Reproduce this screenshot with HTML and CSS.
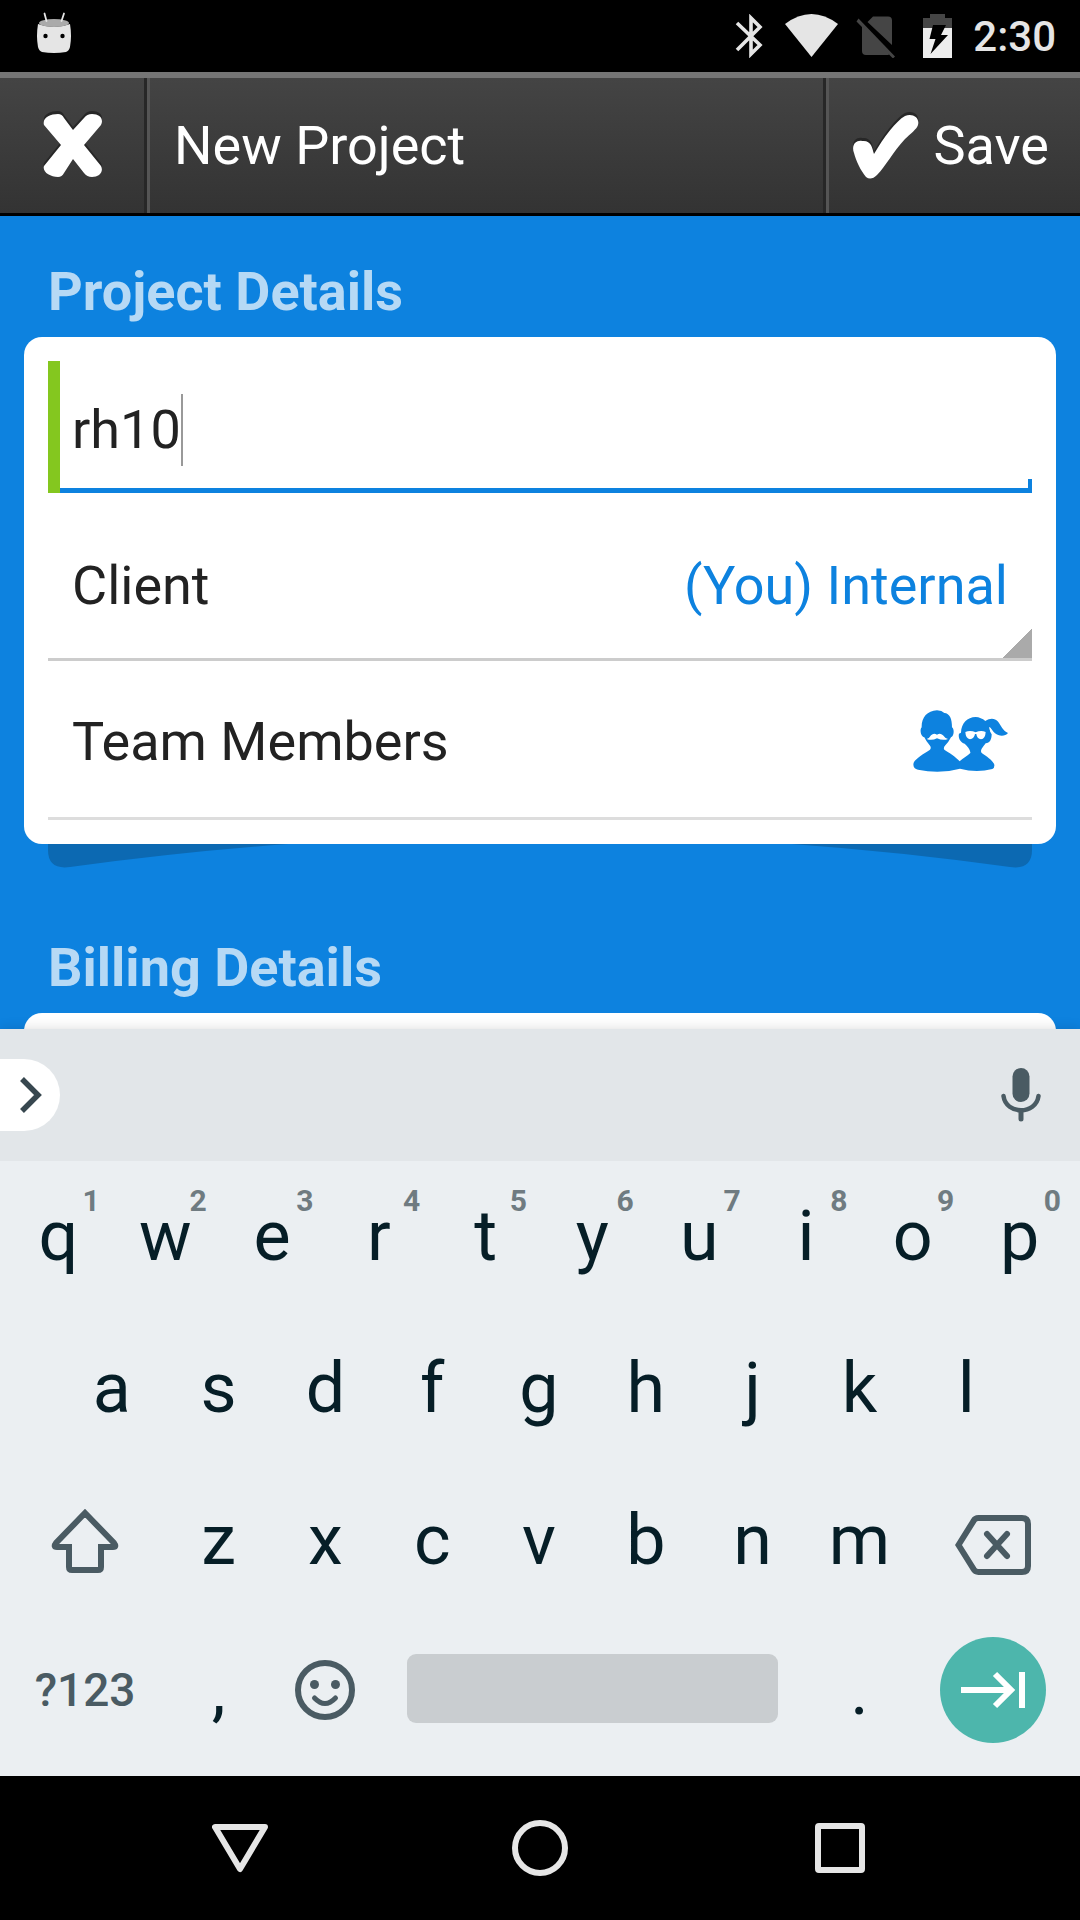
FILE: index.html
```html
<!DOCTYPE html>
<html lang="en">
<head>
<meta charset="utf-8">
<meta name="viewport" content="width=device-width, initial-scale=1">
<title>New Project</title>
<link rel="stylesheet" href="styles.css">
</head>
<body>
<div class="status-bar">
  <svg class="icon" width="36" height="54" viewBox="36 9 36 54" aria-hidden="true">
    <path d="M38 24Q54 30 70 24Q72 36 70 47Q69 51 66 52Q54 54 42 52Q39 51 38 47Q36 36 38 24Z" fill="#e5e5e5"/>
    <ellipse cx="54" cy="23" rx="15" ry="4" fill="#aaa"/>
    <path d="M44.5 13.500L46.500 21M64 13.500L61.500 21" stroke="#e5e5e5" stroke-width="1.800" stroke-linecap="round"/>
    <circle cx="45.500" cy="36" r="2.200"/><circle cx="62.500" cy="36" r="2.200"/>
  </svg>
  <div class="status-icons">
    <svg class="icon" width="28" height="44" viewBox="735 14 28 44" aria-label="Bluetooth" fill="none" stroke="#e5e5e5" stroke-width="3.600">
      <path d="M737 23L760 45L751 54V18L760 27L737 50"/>
    </svg>
    <svg class="icon wifi" width="54" height="44" viewBox="784 14 54 44" aria-label="Wi-Fi">
      <path d="M785 24Q811.500 4 838 24L811.500 57Z" fill="#e5e5e5"/>
    </svg>
    <svg class="icon sim" width="40" height="44" viewBox="856 14 40 44" aria-label="No SIM" fill="#454545">
      <path d="M867.500 22L873 16.500H888Q892 16.500 892 20.500V45ZM862 25L889.500 54Q889 55 887.500 55H866Q862 55 862 51Z"/>
      <path d="M858.500 18.500L895 56.500L893 58.500L856.500 21.500Z"/>
    </svg>
    <svg class="icon battery" width="30" height="44" viewBox="923 14 30 44" aria-label="Charging">
      <path d="M923 28V18H930V14H945V18H952V28Z" fill="#454545"/>
      <path d="M923 28H952V58H923Z" fill="#ededed"/>
      <path d="M933 25H946L941 35H948L930.500 54L935.500 39H929.500Z"/>
    </svg>
    <time class="clock">2:30</time>
  </div>
</div>

<header class="app-bar">
  <button class="bar-button close" type="button" aria-label="Close">
    <svg class="icon" width="62" height="71" viewBox="41 110 62 71" aria-hidden="true">
      <path d="M44 125C42 118 50 114 58 114Q62 114 64 118L73 130L84 118Q87 114 92 114C100 114 104 119 101 125L84 145L101 166C104 172 99 177 92 177Q87 177 84 173L73 159L64 173Q62 177 58 177C50 177 42 172 44 166L61 145Z" transform="translate(0 -3)" fill="#272727"/>
      <path d="M44 125C42 118 50 114 58 114Q62 114 64 118L73 130L84 118Q87 114 92 114C100 114 104 119 101 125L84 145L101 166C104 172 99 177 92 177Q87 177 84 173L73 159L64 173Q62 177 58 177C50 177 42 172 44 166L61 145Z" fill="#fff"/>
    </svg>
  </button>
  <h1 class="title">New Project</h1>
  <button class="bar-button save" type="button">
    <svg class="icon" width="68" height="71" viewBox="852 110 68 71" aria-hidden="true">
      <path d="M854 153C851 145 856 140 862 141C871 140 872 147 874 154C884 137 896 121 905 116C912 113 920 117 918 125C917 129 910 134 905 139C892 153 886 166 877 175Q871 181 866 177C861 171 856 161 854 153Z" transform="translate(0 -3)" fill="#272727"/>
      <path d="M854 153C851 145 856 140 862 141C871 140 872 147 874 154C884 137 896 121 905 116C912 113 920 117 918 125C917 129 910 134 905 139C892 153 886 166 877 175Q871 181 866 177C861 171 856 161 854 153Z" fill="#fff"/>
    </svg>
    Save
  </button>
</header>

<main class="content">
  <section class="group">
    <h2 class="group-title">Project Details</h2>
    <div class="card">
      <div class="row name-row">
        <input class="name-input" type="text" value="rh10" aria-label="Project name">
        <span class="caret"></span>
      </div>
      <div class="row client-row">
        <label for="client">Client</label>
        <select class="client-select" id="client"><option>(You) Internal</option></select>
      </div>
      <button class="row team-row" type="button">
        <span>Team Members</span>
        <svg class="icon" width="96" height="64" viewBox="67 58 288 192" aria-hidden="true">
          <path d="M72 216C78 203 104 188 121 177Q126 171 120 164Q110 153 104 140C94 138 89 118 96 110C95 82 112 60 142 59Q157 60 164 67C180 68 187 84 187 110C195 116 193 137 184 140Q177 154 167 164Q160 172 164 177C178 186 199 199 210 212C220 202 234 195 242 187Q243 181 236 171Q230 164 225 159C211 155 205 141 208 129L214 126C215 98 233 79 258 79Q274 80 287 91C302 81 316 83 324 92C334 104 340 122 355 127C347 138 328 138 316 128C308 121 305 112 299 108Q300 119 306 130C306 147 300 157 288 158Q281 167 276 174Q272 181 276 187C291 198 309 208 314 222Q315 232 308 235Q260 248 211 234Q150 251 85 237C74 234 69 228 72 216Z" fill="#0d82df"/>
          <path d="M111 145Q120 142 124 134Q132 126 142 132Q152 126 160 134Q166 143 175 145Q160 151 142 143Q126 151 111 145ZM227 124Q242 118 258 125Q274 118 288 124Q287 145 274 146Q262 145 260 130H256Q253 145 241 146Q228 144 227 124ZM299 109Q300 124 306 130L309 122Z" fill="#fff"/>
        </svg>
      </button>
    </div>
    <div class="card-shadow" aria-hidden="true">
      <svg class="icon" width="260" height="24" viewBox="0 0 260 24"><path d="M0 0H240Q130 8 22 23Q0 26 0 6Z" fill="#0c69b2"/></svg>
      <svg class="icon" width="260" height="24" viewBox="0 0 260 24"><path d="M260 0H20Q130 8 238 23Q260 26 260 6Z" fill="#0c69b2"/></svg>
    </div>
  </section>
  <section class="group billing">
    <h2 class="group-title">Billing Details</h2>
    <div class="card"></div>
  </section>
</main>

<div class="keyboard">
  <div class="suggestions">
    <button class="expand" type="button" aria-label="Expand">
      <svg class="icon" width="24" height="38" viewBox="0 0 24 38" fill="none" stroke="#37474f" stroke-width="5.500"><path d="M3 3L19 19L3 35"/></svg>
    </button>
    <button class="mic" type="button" aria-label="Voice input">
      <svg class="icon" width="40" height="54" viewBox="0 0 40 54" fill="none" stroke="#4a5b63" stroke-linecap="round"><rect x="11.500" y="0" width="17" height="34" rx="8.500" fill="#4a5b63" stroke="none"/><path d="M2.500 28C5 47 35 47 37.500 28" stroke-width="4.500"/><path d="M20 44V51" stroke-width="5"/></svg>
    </button>
  </div>
  <div class="keys">
    <button class="key" type="button">q<span class="hint">1</span></button>
    <button class="key" type="button">w<span class="hint">2</span></button>
    <button class="key" type="button">e<span class="hint">3</span></button>
    <button class="key" type="button">r<span class="hint">4</span></button>
    <button class="key" type="button">t<span class="hint">5</span></button>
    <button class="key" type="button">y<span class="hint">6</span></button>
    <button class="key" type="button">u<span class="hint">7</span></button>
    <button class="key" type="button">i<span class="hint">8</span></button>
    <button class="key" type="button">o<span class="hint">9</span></button>
    <button class="key" type="button">p<span class="hint">0</span></button>

    <button class="key indent" type="button">a</button>
    <button class="key" type="button">s</button>
    <button class="key" type="button">d</button>
    <button class="key" type="button">f</button>
    <button class="key" type="button">g</button>
    <button class="key" type="button">h</button>
    <button class="key" type="button">j</button>
    <button class="key" type="button">k</button>
    <button class="key" type="button">l</button>

    <button class="key wide first" type="button" aria-label="Shift">
      <svg class="icon" width="68" height="66" viewBox="0 -2 68 66" fill="none" stroke="#4a5b63" stroke-width="6" stroke-linejoin="round"><path d="M34 4L63 34Q66 38 62 38H50V58Q50 61 47 61H21Q18 61 18 58V38H6Q2 38 5 34Z" stroke-linejoin="miter"/></svg>
    </button>
    <button class="key" type="button">z</button>
    <button class="key" type="button">x</button>
    <button class="key" type="button">c</button>
    <button class="key" type="button">v</button>
    <button class="key" type="button">b</button>
    <button class="key" type="button">n</button>
    <button class="key" type="button">m</button>
    <button class="key wide" type="button" aria-label="Delete">
      <svg class="icon" width="76" height="70" viewBox="0 -10 76 70" fill="none" stroke="#4a5b63" stroke-width="6"><path d="M3.500 30L18.500 6Q20 3 23.500 3H67Q73 3 73 9V51Q73 57 67 57H23.500Q20 57 18.500 54Z"/><path d="M32 19L52 41M52 19L32 41" stroke-linecap="round"/></svg>
    </button>

    <button class="key wide first bottom symbols" type="button">?123</button>
    <button class="key bottom" type="button">,</button>
    <button class="key bottom" type="button" aria-label="Emoji">
      <svg class="icon" width="60" height="60" viewBox="0 0 60 60" fill="none" stroke="#4a5b63"><circle cx="30" cy="30" r="27" stroke-width="6"/><circle cx="19.500" cy="24.500" r="4.500" fill="#4a5b63" stroke="none"/><circle cx="40.500" cy="24.500" r="4.500" fill="#4a5b63" stroke="none"/><path d="M19.500 38Q30 49 40.500 38" stroke-width="5" stroke-linecap="round"/></svg>
    </button>
    <button class="key space" type="button" aria-label="Space"><span class="space-bar"></span></button>
    <button class="key bottom" type="button">.</button>
    <button class="key wide bottom" type="button" aria-label="Next">
      <span class="next"><svg class="icon" width="64" height="38" viewBox="0 0 64 38" fill="none" stroke="#fff" stroke-width="6"><path d="M0 19H50M34 3L50 19L34 35M61 1V37"/></svg></span>
    </button>
  </div>
</div>

<nav class="nav-bar">
  <button class="nav-button" type="button" aria-label="Back"><svg class="icon" width="56" height="56" viewBox="0 0 56 56" fill="none" stroke="#e6e6e6" stroke-width="6" stroke-linejoin="round"><path d="M3 7H53L28 49Z"/></svg></button>
  <button class="nav-button" type="button" aria-label="Home"><svg class="icon" width="56" height="56" viewBox="0 0 56 56" fill="none" stroke="#e6e6e6" stroke-width="6"><circle cx="28" cy="28" r="25"/></svg></button>
  <button class="nav-button" type="button" aria-label="Recent apps"><svg class="icon" width="56" height="56" viewBox="0 0 56 56" fill="none" stroke="#e6e6e6" stroke-width="6"><rect x="6" y="6" width="44" height="44" rx="1"/></svg></button>
</nav>
</body>
</html>
```

FILE: styles.css
```css
* {
  box-sizing: border-box;
}

body {
  margin: 0;
  height: 100vh;
  display: flex;
  flex-direction: column;
  background: #0d82df;
  font-family: Roboto, "Liberation Sans", sans-serif;
  font-size: 54px;
  line-height: 72px;
  color: #222;
}

button,
input,
select {
  margin: 0;
  padding: 0;
  border: 0;
  border-radius: 0;
  background: none;
  font: inherit;
  color: inherit;
  outline: 0;
  appearance: none;
}

.icon {
  display: block;
  flex: none;
}

/* Status bar */
.status-bar {
  height: 72px;
  flex: none;
  padding: 0 24px 0 36px;
  display: flex;
  align-items: center;
  justify-content: space-between;
  background: #000;
}

.status-icons {
  display: flex;
  align-items: center;
}

.wifi { margin-left: 21px; }
.sim { margin-left: 18px; }
.battery { margin-left: 27px; }

.clock {
  margin-left: 20px;
  padding-top: 2px;
  font-size: 42px;
  font-weight: 500;
  color: #e5e5e5;
}

/* App bar */
.app-bar {
  height: 144px;
  flex: none;
  display: flex;
  align-items: stretch;
  border-top: 6px solid #757575;
  border-bottom: 3px solid #000;
  background: linear-gradient(#444, #333);
  color: #fff;
}

.bar-button {
  display: flex;
  align-items: center;
}

.close {
  width: 147px;
  justify-content: center;
  border-right: 3px solid #272727;
}

.title {
  flex: 1;
  margin: 0;
  padding-left: 24px;
  border-left: 3px solid #555;
  font-size: 54px;
  font-weight: 400;
  line-height: 136px;
}

.save {
  gap: 14px;
  padding: 0 31px 0 23px;
  border-left: 3px solid #555;
  box-shadow: -3px 0 #272727;
}

/* Form */
.content {
  flex: 1;
  min-height: 0;
  padding: 40px 24px 0;
  overflow: hidden;
}

.group-title {
  margin: 0;
  padding: 0 24px 9px;
  font-size: 54px;
  font-weight: 700;
  color: #b6d9f5;
}

.billing {
  padding-top: 64px;
}

.card {
  min-height: 160px;
  padding: 24px;
  border-radius: 18px;
  background: #fff;
}

.row {
  width: 100%;
  display: flex;
  align-items: center;
  justify-content: space-between;
  padding: 0 24px;
}

/* Focused field: underline with a short tick at its right end */
.name-row {
  justify-content: flex-start;
  padding: 33px 12px 27px;
  border-left: 12px solid #84c71f;
  background:
    linear-gradient(#0d82df, #0d82df) right bottom / 4px 14px no-repeat,
    linear-gradient(#0d82df, #0d82df) left bottom / 100% 5px no-repeat;
  background-origin: padding-box;
}

.name-input {
  height: 72px;
  field-sizing: content;
}

.caret {
  width: 2px;
  height: 72px;
  background: #999;
}

.client-row {
  padding-top: 57px;
  padding-bottom: 36px;
  border-bottom: 3px solid #ccc;
  background: linear-gradient(135deg, transparent 50%, #aaa 50%) right bottom / 29px 29px no-repeat;
  background-origin: padding-box;
  background-clip: padding-box;
}

.client-select {
  height: 72px;
  color: #0d82df;
  text-align-last: right;
}

.team-row {
  padding-top: 45px;
  padding-bottom: 39px;
  border-bottom: 3px solid #ddd;
}

.card-shadow {
  height: 24px;
  margin: 0 24px;
  display: flex;
  justify-content: space-between;
}

/* Keyboard */
.keyboard {
  flex: none;
  position: relative;
  background: #ebeff2;
  box-shadow: 0 0 12px rgba(0, 0, 0, 0.14);
}

.suggestions {
  height: 132px;
  padding-right: 39px;
  display: flex;
  align-items: center;
  justify-content: space-between;
  background: #e2e6e9;
}

.expand {
  width: 60px;
  height: 72px;
  padding-left: 19px;
  border-radius: 0 36px 36px 0;
  background: #fff;
}

.keys {
  padding: 0 7px 13px 5px;
  display: grid;
  grid-template-columns: repeat(20, 1fr);
  grid-template-rows: 152px 152px 152px 146px;
  color: #061e27;
}

.key {
  position: relative;
  grid-column: span 2;
  display: flex;
  align-items: center;
  justify-content: center;
  padding-bottom: 2px;
  font-size: 70px;
}

.indent { grid-column: 2 / span 2; }
.wide { grid-column: span 3; }
.first { grid-column: 1 / span 3; }
.bottom { padding-bottom: 0; }

.hint {
  position: absolute;
  top: 22px;
  right: 12px;
  font-size: 30px;
  font-weight: 700;
  line-height: 36px;
  color: #6f7b81;
}

.symbols {
  font-size: 46px;
  font-weight: 500;
  color: #4a5b63;
}

.space {
  grid-column: span 8;
  padding: 0 28px 4px;
}

.space-bar {
  flex: 1;
  height: 69px;
  border-radius: 9px;
  background: #c9cdd0;
}

.next {
  width: 106px;
  height: 106px;
  display: flex;
  align-items: center;
  justify-content: center;
  border-radius: 50%;
  background: #4db6ac;
}

/* System navigation */
.nav-bar {
  height: 144px;
  flex: none;
  padding: 0 90px;
  display: grid;
  grid-template-columns: repeat(3, 1fr);
  background: #000;
}

.nav-button {
  display: flex;
  align-items: center;
  justify-content: center;
}
```
